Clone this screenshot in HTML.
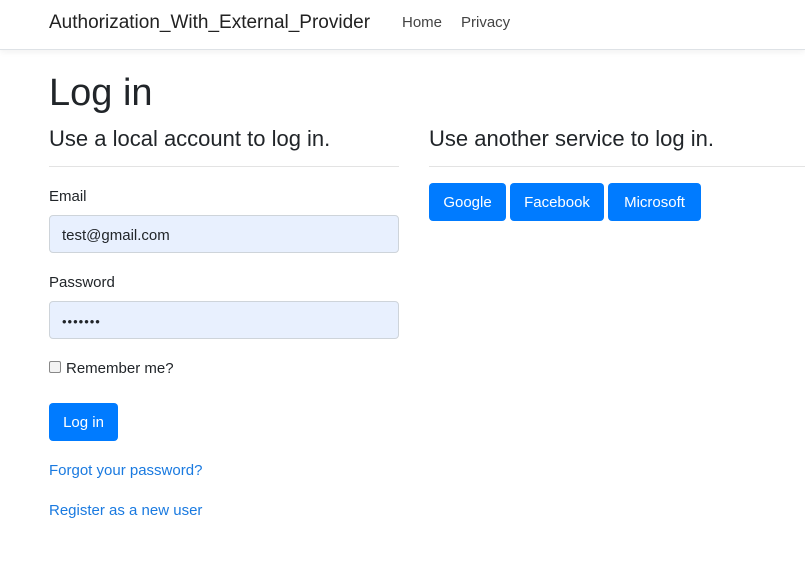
<!DOCTYPE html>
<html><head><style>
*{box-sizing:border-box;margin:0;padding:0}
body{width:805px;height:571px;overflow:hidden;background:#fff;font-family:"Liberation Sans",sans-serif;color:#212529;font-size:15px;position:relative}
.nav{position:absolute;left:0;top:0;width:805px;height:50px;border-bottom:1px solid #dee2e6;box-shadow:0 2px 6px rgba(0,0,0,.06)}
.abs{position:absolute;white-space:nowrap}
.brand{left:49px;top:12px;font-size:19px;color:#222}
.nl{top:14px;font-size:15px;color:#444}
h1{position:absolute;left:49px;top:72px;font-size:38px;font-weight:500}
h4{position:absolute;top:126px;font-size:22px;font-weight:500}
.hr{position:absolute;height:1px;background:#e3e3e3}
.inp{position:absolute;left:49px;width:350px;height:38px;background:#e8f0fe;border:1px solid #ced4da;border-radius:4px;padding:11px 12px 0;font-size:15px}
.btn{position:absolute;background:#007bff;color:#fff;border-radius:4px;height:38px;font-size:15px;line-height:40px;text-align:center}
a{color:#1a7ae0}
</style></head><body>
<div class="nav"></div>
<div class="abs brand">Authorization_With_External_Provider</div>
<div class="abs nl" style="left:402px">Home</div>
<div class="abs nl" style="left:461px">Privacy</div>
<h1>Log in</h1>
<h4 style="left:49px">Use a local account to log in.</h4>
<h4 style="left:429px">Use another service to log in.</h4>
<div class="hr" style="left:49px;top:166px;width:350px"></div>
<div class="hr" style="left:429px;top:166px;width:376px"></div>
<div class="abs" style="left:49px;top:188px">Email</div>
<div class="inp" style="top:215px">test@gmail.com</div>
<div class="abs" style="left:49px;top:274px">Password</div>
<div class="inp" style="top:301px;font-size:13px;letter-spacing:1px;padding-top:12px">•••••••</div>
<div class="abs" style="left:49px;top:361px;width:12px;height:12px;border:1px solid #888;border-radius:2px;background:#f3f3f3"></div>
<div class="abs" style="left:66px;top:360px">Remember me?</div>
<div class="btn" style="left:49px;top:403px;width:69px">Log in</div>
<div class="abs" style="left:49px;top:462px"><a>Forgot your password?</a></div>
<div class="abs" style="left:49px;top:502px"><a>Register as a new user</a></div>
<div class="btn" style="left:429px;top:183px;width:77px">Google</div>
<div class="btn" style="left:510px;top:183px;width:94px">Facebook</div>
<div class="btn" style="left:608px;top:183px;width:93px">Microsoft</div>
</body></html>
